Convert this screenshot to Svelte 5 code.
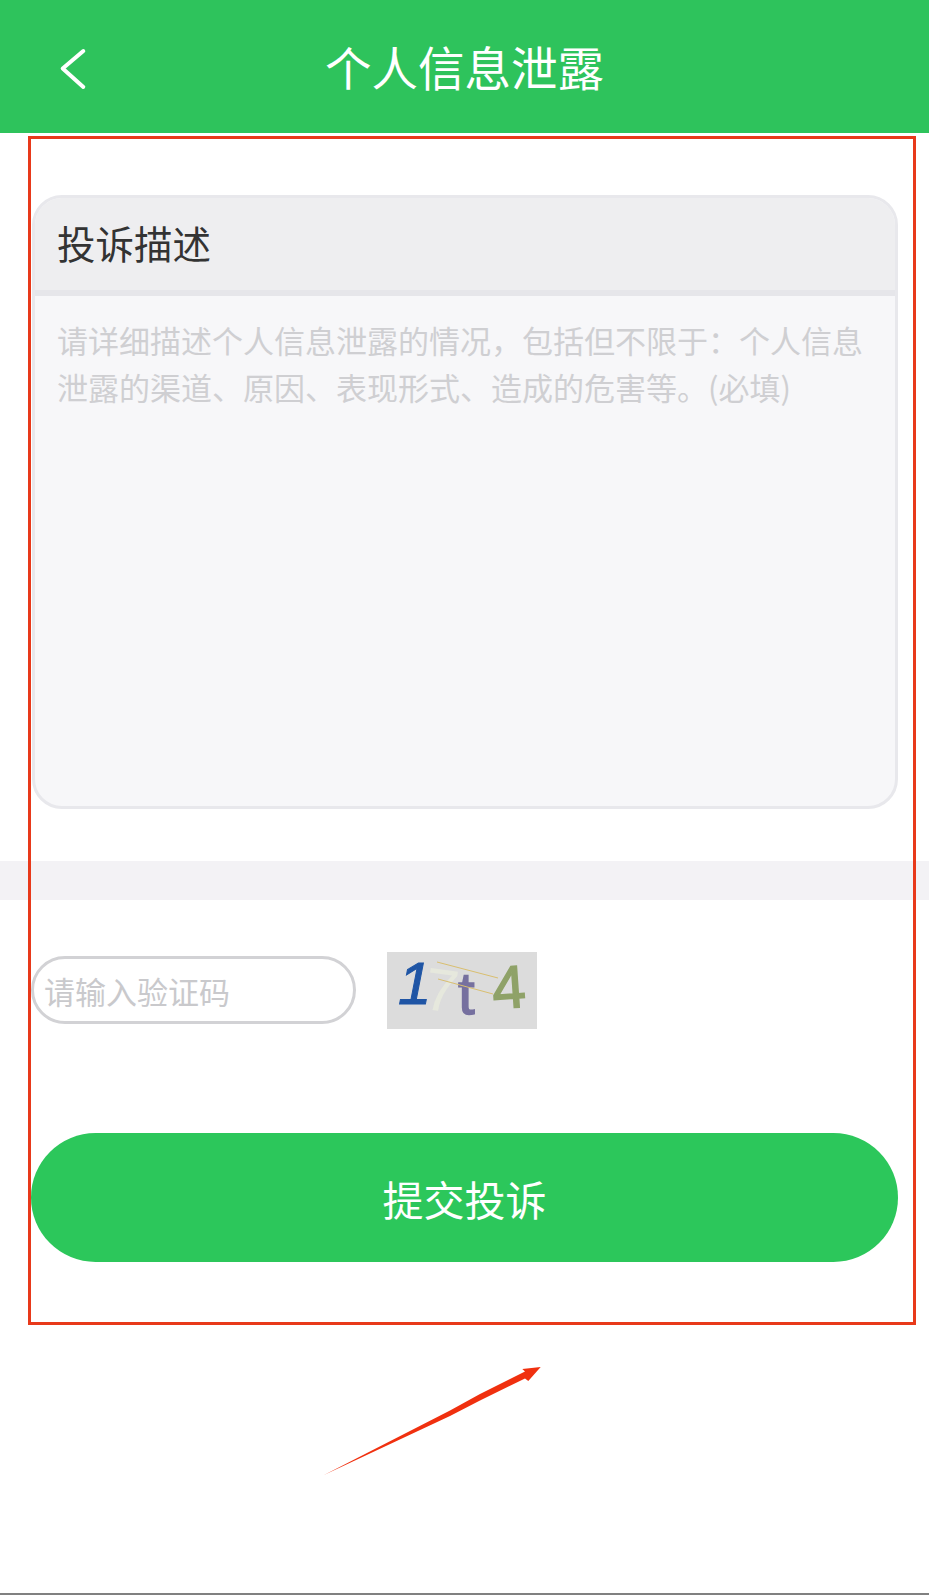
<script>
  const title = '个人信息泄露';
  const placeholder = '请详细描述个人信息泄露的情况，包括但不限于：个人信息泄露的渠道、原因、表现形式、造成的危害等。(必填)';
</script>

<div class="page">
  <header class="topbar">
    <svg class="back" viewBox="0 0 30 44" aria-hidden="true">
      <path d="M25.300 4 L4.700 21.500 L25.300 40" />
    </svg>
    <h1>{title}</h1>
  </header>

  <section class="form">
    <div class="card">
      <div class="card-head">投诉描述</div>
      <div class="card-body">{placeholder}</div>
    </div>
  </section>

  <div class="band"></div>

  <section class="form">
    <div class="captcha-row">
      <div class="captcha-input">请输入验证码</div>
      <svg class="captcha" viewBox="0 0 150 77" aria-label="验证码">
        <rect width="150" height="77" fill="#dcdcdc" />
        <text x="11" y="52" class="c1">1</text>
        <text x="38" y="59" class="c2" transform="rotate(8 54 36)">7</text>
        <text x="71" y="62" class="c3">t</text>
        <text x="105" y="56" class="c4" transform="rotate(-4 121 34)">4</text>
        <path d="M50 10 L111 26 M51 27 L106 42" stroke="#d9bf70" stroke-width="1" fill="none" />
      </svg>
    </div>
    <button class="submit">提交投诉</button>
  </section>

  <div class="bottom-line"></div>

  <!-- annotation drawn over the screenshot -->
  <div class="mark-box"></div>
  <svg class="mark-arrow" viewBox="0 0 240 130" aria-hidden="true">
    <path d="M3 124 L129 59.500 L159 43 L204 20.500 L201.300 18 L219.700 16 L207.300 30 L204 27.500 L159 49.500 L129 65 Z" fill="#f0300f" />
  </svg>
</div>

<style>
  :global(body) {
    margin: 0;
    background: #fff;
  }

  .page {
    position: relative;
    width: 929px;
    height: 1595px;
    display: flex;
    flex-direction: column;
    font-family: "Noto Sans CJK SC", "Noto Sans", sans-serif;
    overflow: hidden;
  }

  .topbar {
    position: relative;
    height: 133px;
    flex-shrink: 0;
    background: #2ec35c;
    display: flex;
    align-items: center;
    justify-content: center;
  }

  .topbar h1 {
    margin: 0;
    font-size: 46.500px;
    font-weight: 400;
    color: #fff;
    position: relative;
    top: -1px;
  }

  .back {
    position: absolute;
    left: 58px;
    top: 47px;
    width: 30px;
    height: 44px;
  }

  .back path {
    fill: none;
    stroke: #fff;
    stroke-width: 4;
    stroke-linecap: round;
    stroke-linejoin: round;
  }

  .form {
    padding: 0 31px;
  }

  .card {
    margin-top: 62px;
    margin-left: 1px;
    height: 614px;
    box-sizing: border-box;
    border: 3px solid #e8e8ec;
    border-radius: 30px;
    background: #f7f7f9;
    overflow: hidden;
    display: flex;
    flex-direction: column;
  }

  .card-head {
    height: 98px;
    flex-shrink: 0;
    box-sizing: border-box;
    border-bottom: 6px solid #e6e6ea;
    background: #eeeef0;
    padding: 0 22px 5px;
    display: flex;
    align-items: center;
    font-size: 38.500px;
    color: #333;
  }

  .card-body {
    padding: 20px 22px;
    font-size: 31px;
    line-height: 47px;
    color: #cfcfd2;
  }

  .band {
    margin-top: 52px;
    height: 39px;
    background: #f3f2f5;
  }

  .captcha-row {
    margin-top: 52px;
    height: 77px;
    display: flex;
    align-items: center;
    gap: 31px;
  }

  .captcha-input {
    width: 325px;
    height: 68px;
    margin-top: -1px;
    box-sizing: border-box;
    border: 3px solid #d2d2d5;
    border-radius: 34px;
    padding-left: 10px;
    display: flex;
    align-items: center;
    font-size: 31px;
    color: #c9c9cc;
  }

  .captcha {
    width: 150px;
    height: 77px;
    flex-shrink: 0;
  }

  .captcha text {
    font-family: "Liberation Sans", sans-serif;
    font-size: 60px;
  }

  .c1 {
    fill: #1f55a5;
    stroke: #1f55a5;
    stroke-width: 1;
    font-style: italic;
  }

  .c2 {
    fill: #e6e8dd;
  }

  .c3 {
    fill: #76709f;
    stroke: #76709f;
    stroke-width: 1.500;
  }

  .c4 {
    fill: #8fa268;
    stroke: #8fa268;
    stroke-width: 1.500;
  }

  .submit {
    display: block;
    width: 100%;
    height: 129px;
    margin-top: 104px;
    border: none;
    border-radius: 65px;
    background: #2cc75b;
    color: #fff;
    font-family: inherit;
    font-size: 41px;
  }

  .bottom-line {
    margin-top: auto;
    height: 2px;
    background: #808080;
  }

  .mark-box {
    position: absolute;
    left: 28px;
    top: 136px;
    width: 888px;
    height: 1189px;
    box-sizing: border-box;
    border: 3px solid #e8391a;
  }

  .mark-arrow {
    position: absolute;
    left: 321px;
    top: 1351px;
    width: 240px;
    height: 130px;
  }
</style>
